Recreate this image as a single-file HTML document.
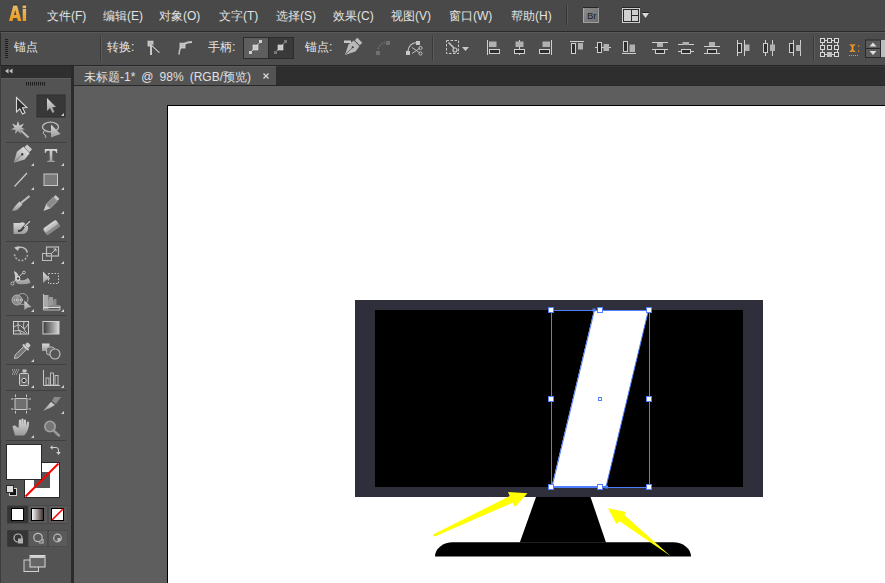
<!DOCTYPE html>
<html><head><meta charset="utf-8">
<style>
*{margin:0;padding:0;box-sizing:border-box}
html,body{width:885px;height:583px;overflow:hidden;background:#2b2b2b;font-family:"Liberation Sans",sans-serif;}
.abs{position:absolute}
#menubar{position:absolute;left:0;top:0;width:885px;height:31px;background:#494949;}
#menuline{position:absolute;left:0;top:31px;width:885px;height:1px;background:#2a2a2a;}
#ctrl{position:absolute;left:0;top:32px;width:885px;height:33px;background:#4d4d4d;border-top:1px solid #5a5a5a;border-left:1px solid #2e2e2e;}
#ctrlline{position:absolute;left:0;top:65px;width:885px;height:1px;background:#262626;}
.mi{position:absolute;top:8px;font-size:12px;color:#e2e2e2;white-space:nowrap;letter-spacing:0}
.ct{position:absolute;top:39px;font-size:12px;color:#e6e6e6;white-space:nowrap}
#tools{position:absolute;left:1px;top:66px;width:70px;height:517px;background:#535353;}
#toolhead{position:absolute;left:1px;top:66px;width:70px;height:12px;background:#2f2f2f;}
#tabrow{position:absolute;left:74px;top:66px;width:811px;height:20px;background:#2e2e2e;border-top:1px solid #383838;border-bottom:1px solid #282828;}
#tab{position:absolute;left:74px;top:66px;width:202px;height:19px;background:#535353;border-top:1px solid #5c5c5c;}
#canvas{position:absolute;left:74px;top:86px;width:811px;height:497px;background:#5e5e5e;}
#artboard{position:absolute;left:167px;top:105px;width:718px;height:478px;background:#fff;border-left:1px solid #000;border-top:1px solid #000;}
.sep{position:absolute;left:6px;width:60px;height:1px;background:#3e3e3e;}
</style></head>
<body>
<div id="menubar"></div>
<div id="menuline"></div>
<div id="ctrl"></div>
<div id="ctrlline"></div>
<div id="tabrow"></div>
<div id="tab"></div>
<div id="canvas"></div>
<div id="artboard"></div>
<div id="tools"></div>
<div id="toolhead"></div>


<!-- tools panel -->
<svg class="abs" style="left:0;top:0" width="74" height="583">
  <defs>
    <linearGradient id="ig" x1="0" y1="0" x2="0" y2="1"><stop offset="0" stop-color="#dadada"/><stop offset="1" stop-color="#9a9a9a"/></linearGradient>
    <linearGradient id="gr" x1="0" y1="0" x2="1" y2="0"><stop offset="0" stop-color="#3a3a3a"/><stop offset="1" stop-color="#d8d8d8"/></linearGradient>
    <linearGradient id="gr2" x1="0" y1="0" x2="1" y2="0"><stop offset="0" stop-color="#ffffff"/><stop offset="1" stop-color="#3a2a2a"/></linearGradient>
  </defs>
  <!-- panel edges -->
  <rect x="0" y="66" width="1" height="517" fill="#3c3c3c"/>
  <rect x="71" y="66" width="3" height="517" fill="#2b2b2b"/>
  <rect x="1" y="78" width="70" height="1" fill="#5e5e5e"/>
  <!-- header collapse -->
  <polygon points="8.5,68.5 8.5,73.5 5,71" fill="#c0c0c0"/>
  <polygon points="12.5,68.5 12.5,73.5 9,71" fill="#c0c0c0"/>
  <!-- grip -->
  <g fill="#1e1e1e">
    <rect x="26" y="82" width="1" height="3.5"/><rect x="28" y="82" width="1" height="3.5"/><rect x="30" y="82" width="1" height="3.5"/>
    <rect x="32" y="82" width="1" height="3.5"/><rect x="34" y="82" width="1" height="3.5"/><rect x="36" y="82" width="1" height="3.5"/>
    <rect x="38" y="82" width="1" height="3.5"/><rect x="40" y="82" width="1" height="3.5"/><rect x="42" y="82" width="1" height="3.5"/>
    <rect x="44" y="82" width="1" height="3.5"/>
  </g>
  <!-- separators -->
  <g fill="#404040">
    <rect x="6" y="142" width="60" height="1"/>
    <rect x="6" y="241" width="60" height="1"/>
    <rect x="6" y="315" width="60" height="1"/>
    <rect x="6" y="364" width="60" height="1"/>
    <rect x="6" y="390" width="60" height="1"/>
    <rect x="6" y="440" width="60" height="1"/>
  </g>
  <!-- corner triangles -->
  <g fill="#d0d0d0">
    <polygon points="64,113 64,116 61,116"/>
    <polygon points="34,163 34,166 31,166"/><polygon points="64,163 64,166 61,166"/>
    <polygon points="34,187 34,190 31,190"/><polygon points="64,187 64,190 61,190"/>
    <polygon points="64,211 64,214 61,214"/>
    <polygon points="64,235 64,238 61,238"/>
    <polygon points="34,261 34,264 31,264"/><polygon points="64,261 64,264 61,264"/>
    <polygon points="34,285 34,288 31,288"/>
    <polygon points="34,309 34,312 31,312"/><polygon points="64,309 64,312 61,312"/>
    <polygon points="34,359 34,362 31,362"/>
    <polygon points="34,385 34,388 31,388"/><polygon points="64,385 64,388 61,388"/>
    <polygon points="64,411 64,414 61,414"/>
    <polygon points="34,435 34,438 31,438"/>
  </g>
  <!-- selection -->
  <path d="M16.5,97.5 L16.5,112 L19.8,108.8 L22.5,114 L25,112.8 L22.5,107.8 L26.8,107.5 Z" fill="#2e2e2e" stroke="#d8d8d8" stroke-width="1.1"/>
  <rect x="37" y="95" width="28" height="22" fill="#383838" stroke="#2e2e2e" stroke-width="1"/>
  <polygon points="64,113 64,116 61,116" fill="#d0d0d0"/>
  <path d="M47,98 L47,111 L50,108 L52.5,113 L54.5,112 L52.2,107.3 L56,107 Z" fill="url(#ig)"/>
  <!-- magic wand -->
  <polygon points="18,121 19.5,125.5 24,123.5 21.5,127.5 25,129.5 20.5,129.8 21,134 18,131 15,134 15.5,129.8 11,129.5 14.5,127.5 12,123.5 16.5,125.5" fill="url(#ig)"/>
  <line x1="21" y1="130.5" x2="28.5" y2="137.5" stroke="#b8b8b8" stroke-width="2"/>
  <!-- lasso -->
  <ellipse cx="50.5" cy="127" rx="8" ry="4.8" fill="none" stroke="#bdbdbd" stroke-width="1.3"/>
  <path d="M44,131 q-2,3 1,4 q2,1 0,3" fill="none" stroke="#bdbdbd" stroke-width="1"/>
  <polygon points="51,124.5 60.5,134 51,137.5" fill="url(#ig)"/>
  <!-- pen -->
  <g transform="translate(21.5,155) rotate(45)">
    <rect x="-3.5" y="-11.5" width="7" height="4" fill="#c8c8c8"/>
    <path d="M-4.5,-7 L4.5,-7 L5.5,1 L0,11 L-5.5,1 Z" fill="url(#ig)"/>
    <circle cx="0" cy="-1" r="1.2" fill="#333"/>
    <line x1="0" y1="0" x2="0" y2="10" stroke="#555" stroke-width="0.6"/>
  </g>
  <!-- type -->
  <path d="M44.8,149 H57.2 V153 L56.4,153 Q56,150.8 54,150.8 H52.3 V160.6 L54.8,161 V162 H47.2 V161 L49.7,160.6 V150.8 H48 Q46,150.8 45.6,153 L44.8,153 Z" fill="url(#ig)"/>
  <!-- line -->
  <line x1="14.5" y1="186.5" x2="27" y2="173" stroke="#c8c8c8" stroke-width="1.2"/>
  <!-- rect -->
  <rect x="44" y="174" width="13.5" height="11.5" fill="#7a7a7a" stroke="#c8c8c8" stroke-width="1"/>
  <!-- brush -->
  <path d="M12,210.5 Q17,211.5 20,207 L22.5,204.5 L19.5,201.5 L17,204 Q14,207 12,210.5 Z" fill="url(#ig)"/>
  <line x1="21" y1="203" x2="29.5" y2="196" stroke="#bdbdbd" stroke-width="2.2"/>
  <!-- pencil -->
  <g transform="translate(50.5,204) rotate(45)">
    <rect x="-2.8" y="-10" width="5.6" height="3" rx="1" fill="#c8c8c8"/>
    <rect x="-2.8" y="-6.5" width="5.6" height="10" fill="#8a8a8a" stroke="#c8c8c8" stroke-width="0.6"/>
    <polygon points="-2.8,3.5 2.8,3.5 0,10" fill="#c8c8c8"/>
  </g>
  <!-- blob brush -->
  <path d="M13.5,223 L20,223 Q24,221 26,225 L28,226 Q29,232 24,234 L13.5,234 Z" fill="url(#ig)"/>
  <path d="M18,231 Q22,231 23,228 L30,220" fill="none" stroke="#3a3a3a" stroke-width="2"/>
  <line x1="24" y1="227" x2="30" y2="221" stroke="#c8c8c8" stroke-width="1.2"/>
  <!-- eraser -->
  <g transform="translate(51.5,227.5) rotate(-35)">
    <rect x="-8" y="-4" width="16" height="8" rx="2" fill="url(#ig)"/>
    <rect x="-8" y="1" width="16" height="3" fill="#888"/>
  </g>
  <!-- rotate -->
  <path d="M17,248.5 A6.5,6.5 0 0 1 27.3,252.5" fill="none" stroke="#bdbdbd" stroke-width="1.5"/>
  <path d="M27.5,255 A6.5,6.5 0 1 1 14.6,253" fill="none" stroke="#b0b0b0" stroke-width="1.6" stroke-dasharray="1.8,1.6"/>
  <polygon points="14,247.5 19.5,246 18,251" fill="#c8c8c8"/>
  <!-- scale -->
  <rect x="42.5" y="253.5" width="9" height="7" fill="none" stroke="#bdbdbd" stroke-width="1"/>
  <rect x="46.5" y="247" width="12" height="9" fill="none" stroke="#bdbdbd" stroke-width="1.2"/>
  <line x1="52" y1="253" x2="56" y2="249" stroke="#d8d8d8" stroke-width="0.9"/>
  <polyline points="53.5,249 56,249 56,251.5" fill="none" stroke="#d8d8d8" stroke-width="0.9"/>
  <!-- warp -->
  <path d="M14,271 Q19,273 19,279 Q23,282 28,278 Q30,280 30.5,283 Q25,285 18,284 Q14,282 15,276 Z" fill="url(#ig)"/>
  <line x1="12.5" y1="283" x2="24" y2="272" stroke="#d0d0d0" stroke-width="0.9"/>
  <circle cx="12.5" cy="283.5" r="1.5" fill="#444" stroke="#ddd" stroke-width="0.8"/>
  <circle cx="18" cy="278.5" r="1.8" fill="#444" stroke="#eee" stroke-width="1"/>
  <circle cx="24" cy="272.5" r="1.3" fill="#444" stroke="#ddd" stroke-width="0.8"/>
  <!-- free transform -->
  <rect x="48.5" y="273.5" width="10" height="10" fill="none" stroke="#c8c8c8" stroke-width="1" stroke-dasharray="1.5,1.5"/>
  <polygon points="43,271.5 50.5,279 47,279.5 43,283" fill="url(#ig)"/>
  <!-- shape builder -->
  <circle cx="17" cy="300" r="5" fill="#8a8a8a" stroke="#b0b0b0" stroke-width="1"/>
  <circle cx="22.5" cy="299" r="5.5" fill="none" stroke="#a8a8a8" stroke-width="1"/>
  <line x1="14" y1="300" x2="24" y2="300" stroke="#eee" stroke-width="1" stroke-dasharray="1,1"/>
  <polygon points="24.3,300.5 31.4,307 28,307.5 24.3,310" fill="url(#ig)"/>
  <!-- perspective grid -->
  <path d="M43.5,294 L43.5,310 L60,310 L60,306 L49,306 L49,300 L53,301 L53,305" fill="none" stroke="#c0c0c0" stroke-width="1"/>
  <rect x="44" y="295" width="4.5" height="14" fill="#a8a8a8"/>
  <rect x="49" y="297" width="4" height="8" fill="#9a9a9a"/>
  <rect x="53.5" y="299" width="3" height="6" fill="#8a8a8a"/>
  <line x1="43.5" y1="307.5" x2="60" y2="307.5" stroke="#dcdcdc" stroke-width="1"/>
  <!-- mesh -->
  <rect x="13.5" y="321.5" width="15" height="12.5" fill="none" stroke="#d0d0d0" stroke-width="1"/>
  <path d="M14,327 Q19,323 22,327 T28,324 M14,331 Q20,329 25,333 M18,322 Q17,329 21,334 M24,322 Q22,329 27,333" fill="none" stroke="#d0d0d0" stroke-width="0.9"/>
  <!-- gradient -->
  <rect x="43" y="321.5" width="16" height="12.5" fill="url(#gr)" stroke="#cfcfcf" stroke-width="1"/>
  <!-- eyedropper -->
  <g transform="translate(21.5,351.5) rotate(45)">
    <rect x="-2.5" y="-11" width="5" height="4" rx="1.5" fill="#c8c8c8"/>
    <rect x="-4" y="-7" width="8" height="2" fill="#c8c8c8"/>
    <path d="M-2,-5 L2,-5 L2,7 L0,10 L-2,7 Z" fill="#777" stroke="#d0d0d0" stroke-width="0.8"/>
  </g>
  <!-- blend -->
  <rect x="42" y="343.5" width="7.5" height="7.5" fill="url(#ig)"/>
  <rect x="46.5" y="347" width="8" height="8" rx="2.5" fill="#6a6a6a" stroke="#b8b8b8" stroke-width="1"/>
  <circle cx="55" cy="354" r="5" fill="#555" stroke="#c0c0c0" stroke-width="1.1"/>
  <!-- symbol sprayer -->
  <g fill="#cfcfcf">
    <rect x="12" y="369.5" width="1" height="1"/><rect x="14" y="369.5" width="1" height="1"/><rect x="16" y="369.5" width="1" height="1"/><rect x="18" y="369.5" width="1" height="1"/>
    <rect x="13" y="371.5" width="1" height="1"/><rect x="15" y="371.5" width="1" height="1"/><rect x="17" y="371.5" width="1" height="1"/>
    <rect x="12" y="373.5" width="1" height="1"/><rect x="14" y="373.5" width="1" height="1"/><rect x="16" y="373.5" width="1" height="1"/>
  </g>
  <rect x="22.5" y="369.5" width="4" height="3" fill="#c8c8c8"/>
  <rect x="19.5" y="373.5" width="9" height="12" rx="1" fill="#666" stroke="#cfcfcf" stroke-width="1"/>
  <circle cx="24" cy="380.5" r="2.2" fill="#333" stroke="#d8d8d8" stroke-width="1"/>
  <!-- graph -->
  <path d="M43.5,370 V385.5 H60" fill="none" stroke="#c8c8c8" stroke-width="1"/>
  <rect x="46" y="378" width="3" height="7" fill="none" stroke="#c8c8c8" stroke-width="0.9"/>
  <rect x="50.5" y="373" width="3" height="12" fill="none" stroke="#c8c8c8" stroke-width="0.9"/>
  <rect x="55" y="375.5" width="3" height="9.5" fill="none" stroke="#c8c8c8" stroke-width="0.9"/>
  <!-- artboard -->
  <rect x="15" y="398.5" width="12" height="11" fill="#6f6f6f" stroke="#c8c8c8" stroke-width="1"/>
  <g stroke="#c8c8c8" stroke-width="1">
    <line x1="11" y1="399" x2="13.5" y2="399"/><line x1="28.5" y1="399" x2="31" y2="399"/>
    <line x1="11" y1="409" x2="13.5" y2="409"/><line x1="28.5" y1="409" x2="31" y2="409"/>
    <line x1="15.5" y1="394.5" x2="15.5" y2="397"/><line x1="26.5" y1="394.5" x2="26.5" y2="397"/>
    <line x1="15.5" y1="411" x2="15.5" y2="413.5"/><line x1="26.5" y1="411" x2="26.5" y2="413.5"/>
  </g>
  <!-- slice -->
  <polygon points="43,411 51,402 55,405 50,408" fill="url(#ig)"/>
  <polygon points="54,397 61,397 56,404 52,401" fill="#888"/>
  <!-- hand -->
  <path d="M15,435.5 L24,435.5 Q28,432 29,425 L29,422 Q28,421 27,422 L26,426 L26,420 Q25,419 24,420 L23.5,425 L23.5,419 Q22.5,418 21.5,419 L21,425 L21,420 Q20,419 19,420 L18.5,428 L15,425.5 Q13,425 12.5,426.5 Z" fill="url(#ig)"/>
  <!-- zoom -->
  <line x1="54" y1="431" x2="59" y2="435.5" stroke="#9a9a9a" stroke-width="2.5" stroke-linecap="round"/>
  <circle cx="50" cy="426.5" r="5.2" fill="#767676" stroke="#a0a0a0" stroke-width="1.6"/>
  <!-- swap arrow -->
  <path d="M51,447.5 L56,447.5 Q58.5,447.5 58.5,450 L58.5,453" fill="none" stroke="#d0d0d0" stroke-width="1"/>
  <polygon points="50,447.5 52.5,445.2 52.5,449.8" fill="#d0d0d0"/>
  <polygon points="58.5,455 56.2,452 60.8,452" fill="#d0d0d0"/>
  <!-- stroke box -->
  <rect x="24.5" y="462.5" width="35" height="35" fill="#fff" stroke="#2a2a2a" stroke-width="1"/>
  <rect x="34" y="472" width="16" height="16" fill="#545454"/>
  <line x1="25.5" y1="496.5" x2="58.5" y2="463.5" stroke="#ff0000" stroke-width="2"/>
  <!-- fill box -->
  <rect x="6.5" y="444.5" width="35" height="35" fill="#fff" stroke="#2a2a2a" stroke-width="1"/>
  <!-- default colors -->
  <rect x="9.5" y="488.5" width="7" height="7" fill="#111" stroke="#d0d0d0" stroke-width="1"/>
  <rect x="6.5" y="485.5" width="7" height="7" fill="#ddd" stroke="#2a2a2a" stroke-width="1"/>
  <!-- color mode buttons -->
  <rect x="7" y="505.5" width="60.5" height="18" fill="#3e3e3e"/>
  <rect x="7.5" y="506" width="20" height="17" fill="#353535"/>
  <rect x="28.5" y="506" width="19" height="17" fill="#5a5a5a"/>
  <rect x="48.5" y="506" width="19" height="17" fill="#5a5a5a"/>
  <rect x="11.5" y="508.5" width="12" height="12" fill="#fff" stroke="#000" stroke-width="1"/>
  <rect x="31.5" y="508.5" width="12" height="12" fill="url(#gr2)" stroke="#000" stroke-width="1"/>
  <rect x="51.5" y="508.5" width="12" height="12" fill="#fff" stroke="#000" stroke-width="1"/>
  <line x1="52" y1="520" x2="63" y2="509" stroke="#ff0000" stroke-width="1.6"/>
  <!-- draw mode buttons -->
  <rect x="7" y="530" width="60.5" height="17" fill="#3e3e3e"/>
  <rect x="7.5" y="530.5" width="20" height="16" fill="#353535"/>
  <rect x="28.5" y="530.5" width="19" height="16" fill="#5a5a5a"/>
  <rect x="48.5" y="530.5" width="19" height="16" fill="#5a5a5a"/>
  <circle cx="18" cy="538" r="4" fill="none" stroke="#bdbdbd" stroke-width="1.2"/>
  <rect x="18" y="538.5" width="5" height="5" fill="#b0b0b0"/>
  <circle cx="38" cy="537.5" r="4.2" fill="none" stroke="#bdbdbd" stroke-width="1.2"/>
  <path d="M43,539 V543 H39" fill="none" stroke="#bdbdbd" stroke-width="1.2"/>
  <circle cx="57.5" cy="538" r="3.8" fill="none" stroke="#bdbdbd" stroke-width="1.2"/>
  <rect x="57.5" y="538" width="3" height="3" fill="#bdbdbd"/>
  <!-- screen mode -->
  <rect x="24" y="560" width="14.5" height="11.5" fill="#5f5f5f" stroke="#cfcfcf" stroke-width="1"/>
  <rect x="30" y="555.5" width="15" height="11.5" fill="#666" stroke="#dcdcdc" stroke-width="1"/>
  <rect x="30.5" y="556" width="14" height="2" fill="#cfcfcf"/>
</svg>

<!-- menu -->
<svg class="abs" style="left:0;top:0" width="40" height="30">
  <defs><linearGradient id="aig" x1="0" y1="0" x2="0" y2="1"><stop offset="0" stop-color="#e9bb66"/><stop offset="1" stop-color="#ec9a1e"/></linearGradient></defs>
  <rect x="13.3" y="4.4" width="3.8" height="1" fill="#2a2a2a"/>
  <rect x="22.7" y="4.4" width="3.4" height="1" fill="#2a2a2a"/>
  <path d="M9,21 L13.4,5.4 L17.1,5.4 L21.4,21 L17.9,21 L17.1,18 L13.3,18 L12.5,21 Z M14,15 L16.4,15 L15.2,9.8 Z" fill="url(#aig)" fill-rule="evenodd"/>
  <rect x="22.7" y="5.4" width="3.4" height="2.6" fill="#e9b45a"/>
  <rect x="22.7" y="8.8" width="3.4" height="12.2" fill="url(#aig)"/>
</svg>
<div class="mi" style="left:47px">文件(F)</div>
<div class="mi" style="left:103px">编辑(E)</div>
<div class="mi" style="left:159px">对象(O)</div>
<div class="mi" style="left:219px">文字(T)</div>
<div class="mi" style="left:276px">选择(S)</div>
<div class="mi" style="left:333px">效果(C)</div>
<div class="mi" style="left:391px">视图(V)</div>
<div class="mi" style="left:449px">窗口(W)</div>
<div class="mi" style="left:511px">帮助(H)</div>

<!-- control text -->
<div class="ct" style="left:14px">锚点</div>
<div class="ct" style="left:107px">转换:</div>
<div class="ct" style="left:208px">手柄:</div>
<div class="ct" style="left:305px">锚点:</div>


<!-- control bar icons -->
<svg class="abs" style="left:0;top:0" width="885" height="66">
  <!-- menu separator & Br & workspace -->
  <rect x="566" y="5" width="1" height="20" fill="#333"/>
  <rect x="567" y="5" width="1" height="20" fill="#5a5a5a"/>
  <defs><linearGradient id="brg" x1="0" y1="0" x2="1" y2="1"><stop offset="0" stop-color="#8e8e8e"/><stop offset="1" stop-color="#6a6a6a"/></linearGradient></defs>
  <rect x="583" y="7" width="15" height="1" fill="#262626"/>
  <rect x="583" y="8" width="16" height="15" fill="url(#brg)"/>
  <rect x="583" y="8" width="1" height="15" fill="#a8a8a8"/>
  <rect x="583" y="22" width="16" height="1" fill="#a0a0a0"/>
  <rect x="598" y="8" width="1" height="15" fill="#9a9a9a"/>
  <text x="587" y="19" font-size="9.5" font-family="Liberation Sans" fill="#1e1e1e">Br</text>
  <rect x="622" y="7" width="18" height="1" fill="#262626"/>
  <rect x="622.5" y="8.5" width="17" height="14" fill="#2a2a2a" stroke="#cfcfcf" stroke-width="1"/>
  <rect x="624" y="10" width="7" height="11" fill="#d0d0d0"/>
  <rect x="632" y="10" width="6" height="5" fill="#cdcdcd"/>
  <rect x="632" y="16" width="6" height="5" fill="#cdcdcd"/>
  <rect x="642" y="12" width="7" height="1" fill="#262626"/>
  <polygon points="642,13 649,13 645.5,18" fill="#d8d8d8"/>

  <!-- grip -->
  <g fill="#1e1e1e">
    <rect x="5" y="39" width="3" height="1"/><rect x="5" y="41" width="3" height="1"/><rect x="5" y="43" width="3" height="1"/>
    <rect x="5" y="45" width="3" height="1"/><rect x="5" y="47" width="3" height="1"/><rect x="5" y="49" width="3" height="1"/>
    <rect x="5" y="51" width="3" height="1"/><rect x="5" y="53" width="3" height="1"/><rect x="5" y="55" width="3" height="1"/>
    <rect x="5" y="57" width="3" height="1"/>
  </g>
  <!-- separators -->
  <rect x="100" y="36" width="1" height="25" fill="#3a3a3a"/><rect x="101" y="36" width="1" height="25" fill="#5c5c5c"/>
  <rect x="432" y="36" width="1" height="25" fill="#3a3a3a"/><rect x="433" y="36" width="1" height="25" fill="#5c5c5c"/>
  <rect x="813" y="36" width="1" height="25" fill="#3a3a3a"/><rect x="814" y="36" width="1" height="25" fill="#5c5c5c"/>

  <!-- convert icons -->
  <rect x="148" y="40" width="5" height="1" fill="#222"/>
  <rect x="148" y="41" width="5" height="5" fill="#bdbdbd" stroke="#d8d8d8" stroke-width="0.8"/>
  <rect x="150" y="46" width="2" height="9" fill="#c8c8c8"/>
  <line x1="152" y1="45.5" x2="159.5" y2="52.5" stroke="#c8c8c8" stroke-width="1.6"/>
  <line x1="152" y1="44.5" x2="159.5" y2="51.5" stroke="#2a2a2a" stroke-width="0.8"/>
  <rect x="180" y="42" width="5" height="1" fill="#222"/>
  <path d="M179,54.5 Q179.5,48 182,46" fill="none" stroke="#c0c0c0" stroke-width="1.6"/>
  <path d="M184,44 Q187,42 192,42" fill="none" stroke="#c0c0c0" stroke-width="1.8"/>
  <rect x="180" y="43" width="5" height="5" fill="#bdbdbd" stroke="#d8d8d8" stroke-width="0.8"/>

  <!-- handle buttons -->
  <rect x="243" y="37" width="51" height="22" fill="#2c2c2c"/>
  <rect x="244" y="38" width="24" height="20" fill="#5e5e5e"/>
  <rect x="269" y="38" width="24" height="20" fill="#3a3a3a"/>
  <line x1="250" y1="53" x2="261" y2="41" stroke="#d8d8d8" stroke-width="0.8"/>
  <rect x="253" y="45" width="5" height="5" fill="#c8c8c8" stroke="#e4e4e4" stroke-width="0.6"/>
  <rect x="249" y="51" width="3" height="3" fill="#d0d0d0"/>
  <rect x="259" y="40" width="3" height="3" fill="#d0d0d0"/>
  <line x1="275" y1="53" x2="286" y2="41" stroke="#bbb" stroke-width="0.8"/>
  <rect x="278" y="45" width="5" height="5" fill="#c8c8c8" stroke="#e4e4e4" stroke-width="0.6"/>
  <rect x="274" y="51" width="3" height="3" fill="#777"/>
  <rect x="284" y="40" width="3" height="3" fill="#777"/>

  <!-- pen icon -->
  <rect x="344" y="40.5" width="7" height="2.5" fill="#c8c8c8"/>
  <g transform="translate(352,48) rotate(45)">
    <rect x="-3.5" y="-11" width="7" height="3.5" fill="#bfbfbf"/>
    <path d="M-4,-6.5 L4,-6.5 L5,0 L0,10 L-5,0 Z" fill="#b8b8b8"/>
    <circle cx="0" cy="-1" r="1" fill="#333"/>
    <line x1="0" y1="0" x2="0" y2="9" stroke="#444" stroke-width="0.6"/>
  </g>
  <!-- dim curve -->
  <g fill="#707070">
    <rect x="376" y="51" width="4" height="4"/><rect x="386" y="41" width="4" height="4"/>
    <rect x="377.5" y="47.5" width="1.5" height="1.5"/><rect x="379" y="45" width="1.5" height="1.5"/>
    <rect x="381" y="43" width="1.5" height="1.5"/><rect x="383.5" y="41.8" width="1.5" height="1.5"/>
  </g>
  <!-- scissors curve -->
  <path d="M408,51 Q409,43 417,42.5" fill="none" stroke="#c4c4c4" stroke-width="1.2"/>
  <rect x="406" y="51" width="4" height="4" fill="#c8c8c8"/>
  <rect x="416" y="41" width="4" height="4" fill="#c8c8c8"/>
  <line x1="412" y1="47.5" x2="420" y2="53" stroke="#c8c8c8" stroke-width="0.9"/>
  <line x1="412" y1="53.5" x2="420" y2="48" stroke="#c8c8c8" stroke-width="0.9"/>
  <circle cx="420.5" cy="48" r="1.6" fill="none" stroke="#c8c8c8" stroke-width="0.9"/>
  <circle cx="420.5" cy="53.5" r="1.6" fill="none" stroke="#c8c8c8" stroke-width="0.9"/>

  <!-- select similar -->
  <rect x="446.5" y="40.5" width="12" height="13" fill="none" stroke="#c8c8c8" stroke-width="1" stroke-dasharray="2.5,1.5"/>
  <line x1="448.5" y1="42.5" x2="454" y2="48" stroke="#c8c8c8" stroke-width="1.6"/>
  <circle cx="455" cy="50" r="2" fill="none" stroke="#c8c8c8" stroke-width="1.2"/>
  <polygon points="462,47 469,47 465.5,51" fill="#c8c8c8"/>

  <g fill="#2e2e2e" stroke="#cfcfcf" stroke-width="1">
  <!-- align left -->
  <line x1="487.5" y1="40" x2="487.5" y2="55"/>
  <rect x="489.5" y="49.5" width="10" height="4"/>
  <!-- align hcenter -->
  <line x1="519.5" y1="40" x2="519.5" y2="55"/>
  <rect x="514.5" y="49.5" width="10" height="4"/>
  <!-- align right -->
  <line x1="551.5" y1="40" x2="551.5" y2="55"/>
  <rect x="539.5" y="49.5" width="10" height="4"/>
  <!-- align top -->
  <line x1="570" y1="41.5" x2="584" y2="41.5"/>
  <rect x="571.5" y="43.5" width="4" height="10"/>
  <!-- align vcenter -->
  <line x1="595" y1="47.5" x2="611" y2="47.5"/>
  <rect x="597.5" y="42.5" width="4" height="10"/>
  <!-- align bottom -->
  <line x1="622" y1="53.5" x2="636" y2="53.5"/>
  <rect x="623.5" y="41.5" width="4" height="10"/>
  <!-- dist top -->
  <line x1="652" y1="42.5" x2="668" y2="42.5"/><line x1="652" y1="49.5" x2="668" y2="49.5"/>
  <rect x="655.5" y="49.5" width="9" height="4"/>
  <!-- dist vcenter -->
  <line x1="678" y1="44.5" x2="694" y2="44.5"/><line x1="678" y1="51.5" x2="694" y2="51.5"/>
  <rect x="681.5" y="49.5" width="9" height="4"/>
  <!-- dist bottom -->
  <line x1="704" y1="46.5" x2="720" y2="46.5"/><line x1="704" y1="53.5" x2="720" y2="53.5"/>
  <rect x="707.5" y="49.5" width="9" height="4"/>
  <!-- dist left -->
  <line x1="737.5" y1="40" x2="737.5" y2="56"/><line x1="744.5" y1="40" x2="744.5" y2="56"/>
  <rect x="737.5" y="43.5" width="4" height="9"/>
  <!-- dist hcenter -->
  <line x1="765.5" y1="40" x2="765.5" y2="56"/><line x1="772.5" y1="40" x2="772.5" y2="56"/>
  <rect x="763.5" y="43.5" width="4" height="9"/>
  <!-- dist right -->
  <line x1="793.5" y1="40" x2="793.5" y2="56"/><line x1="800.5" y1="40" x2="800.5" y2="56"/>
  <rect x="789.5" y="43.5" width="4" height="9"/>
  </g>
  <g fill="#b0b0b0">
  <rect x="489" y="41.5" width="7.5" height="5.5"/>
  <rect x="515.5" y="41.5" width="8" height="5.5"/>
  <rect x="542.5" y="41.5" width="7.5" height="5.5"/>
  <rect x="578" y="43" width="5" height="6.5"/>
  <rect x="603.5" y="44" width="5.5" height="7"/>
  <rect x="629.5" y="44.5" width="5.5" height="7.5"/>
  <rect x="657" y="43" width="6" height="4"/>
  <rect x="682.5" y="42" width="6.5" height="3"/>
  <rect x="709" y="42" width="6" height="4"/>
  <rect x="745" y="44.5" width="4.5" height="6.5"/>
  <rect x="770" y="44.5" width="5" height="6.5"/>
  <rect x="796" y="45" width="4.5" height="6"/>
  </g>
  <!-- ref point grid -->
  <g fill="none" stroke="#d0d0d0" stroke-width="1">
    <path d="M822.5,40.5 H837.5 M822.5,54.5 H837.5 M822.5,40.5 V54.5 M837.5,40.5 V54.5"/>
  </g>
  <g fill="#464646" stroke="#d8d8d8" stroke-width="1">
    <rect x="820.5" y="38.5" width="4" height="4"/><rect x="827.5" y="38.5" width="4" height="4"/><rect x="834.5" y="38.5" width="4" height="4"/>
    <rect x="820.5" y="45.5" width="4" height="4"/><rect x="827.5" y="45.5" width="4" height="4"/><rect x="834.5" y="45.5" width="4" height="4"/>
    <rect x="820.5" y="52.5" width="4" height="4"/><rect x="834.5" y="52.5" width="4" height="4"/>
  </g>
  <rect x="827" y="52" width="5" height="5" fill="#bcbcbc"/>
  <!-- X: -->
  <path d="M849.8,44.9 H851.6 L852.5,48.1 L851.6,51.3 H849.8 M855.2,44.9 H853.4 L852.5,48.1 L853.4,51.3 H855.2" fill="none" stroke="#f29a22" stroke-width="1.3"/>
  <rect x="858" y="45.5" width="1.2" height="1.2" fill="#f29a22"/><rect x="858" y="50.5" width="1.2" height="1.2" fill="#f29a22"/>
  <g fill="#f29a22"><rect x="849" y="55" width="1" height="1"/><rect x="851" y="55" width="1" height="1"/><rect x="853" y="55" width="1" height="1"/><rect x="855" y="55" width="1" height="1"/><rect x="857" y="55" width="1" height="1"/></g>
  <!-- spinner -->
  <rect x="865" y="39.5" width="16" height="18.5" fill="#2a2a2a"/>
  <rect x="866" y="40.5" width="14" height="7.5" fill="#5a5a5a"/>
  <rect x="866" y="49" width="14" height="8" fill="#5a5a5a"/>
  <polygon points="869.5,46.5 876.5,46.5 873,42.5" fill="#e0e0e0"/>
  <polygon points="869.5,51 876.5,51 873,55" fill="#e0e0e0"/>
  <rect x="881" y="40" width="4" height="17" fill="#bdbdbd"/>
</svg>

<!-- tab -->
<div class="abs" style="left:84px;top:69px;font-size:12px;color:#e0e0e0;white-space:nowrap;word-spacing:2.7px">未标题-1* @ 98% (RGB/预览)</div>
<svg class="abs" style="left:260px;top:70px" width="12" height="12"><path d="M3.5,3.5 L8.5,8.5 M8.5,3.5 L3.5,8.5" stroke="#d8d8d8" stroke-width="1.3"/></svg>

<!-- artwork -->
<svg class="abs" style="left:0;top:0" width="885" height="583">
  <rect x="355" y="300" width="408" height="197" fill="#2e2f3b"/>
  <rect x="375" y="310" width="368" height="177" fill="#000"/>
  <polygon points="594,310 648.5,310 606,487 551.5,487" fill="#fff"/>
  <polygon points="536,497 590.5,497 606,542.5 519.8,542.5" fill="#000"/>

  <path d="M453,542.3 L673,542.3 A18,14.3 0 0 1 691,556.6 L435,556.6 A18,14.3 0 0 1 453,542.3 Z" fill="#000"/>
  <!-- selection -->
  <g fill="none" stroke="#4f7fff" stroke-width="1">
    <rect x="551.5" y="310.5" width="98" height="177"/>
    <line x1="594.5" y1="310" x2="552" y2="487"/>
    <line x1="648.5" y1="310" x2="606" y2="487"/>
    <line x1="552" y1="486.5" x2="606" y2="486.5"/>
  </g>
  <g fill="#fff" stroke="#4f7fff" stroke-width="1">
    <rect x="548.5" y="307.5" width="5" height="5"/><rect x="597.5" y="307.5" width="5" height="5"/><rect x="646.5" y="307.5" width="5" height="5"/>
    <rect x="548.5" y="396.5" width="5" height="5"/><rect x="646.5" y="396.5" width="5" height="5"/>
    <rect x="548.5" y="484.5" width="5" height="5"/><rect x="597.5" y="484.5" width="5" height="5"/><rect x="646.5" y="484.5" width="5" height="5"/>
    <rect x="598.5" y="397.5" width="3" height="3"/>
  </g>
  <rect x="592.5" y="308.5" width="3" height="3" fill="#4f7fff"/>
  <rect x="605" y="485.5" width="3" height="3" fill="#4f7fff"/>
  <!-- yellow arrows -->
  <polygon points="433,534.6 509.7,496 508,492 527.5,493.3 515,507 512.5,502.8 434.8,536.4 433.3,536" fill="#ffff00"/>
  <polygon points="670.5,556 619.5,521.3 616.3,524 608,508.2 626,512 624.3,515.1" fill="#ffff00"/>
</svg>
</body></html>
